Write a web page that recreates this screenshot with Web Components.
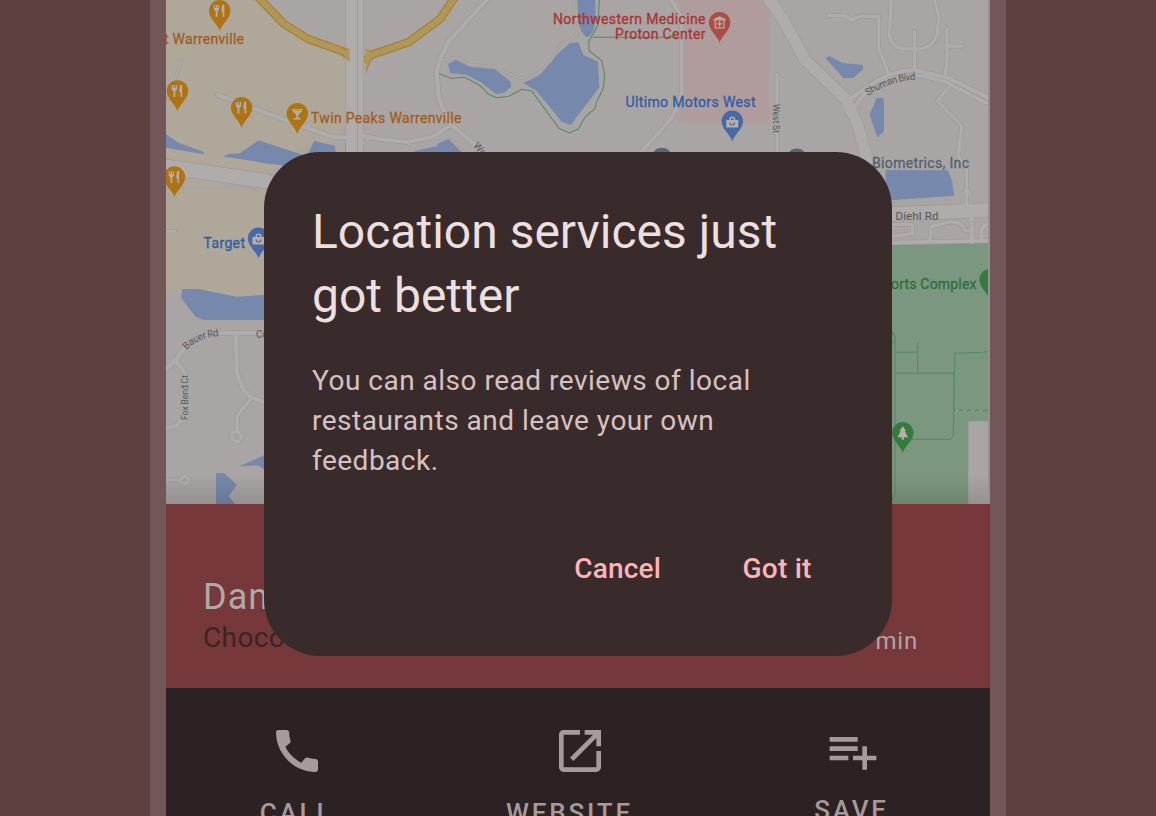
<!DOCTYPE html>
<html lang="en">
<head>
<meta charset="utf-8">
<title>Location services</title>
<style>
html,body{margin:0;height:100%;overflow:hidden;background:#5e4041;font-family:Roboto,"Liberation Sans",sans-serif}
</style>
</head>
<body>
<app-stage>
  <phone-frame>
    <area-map></area-map>
    <place-header><span slot="name">Dan</span><span slot="kind">Choco</span><span slot="time">min</span></place-header>
    <action-bar>
      <action-item icon="call">CALL</action-item>
      <action-item icon="open" style="--trail:20px">WEBSITE</action-item>
      <action-item icon="list" style="--gap:13px;--trail:2px">SAVE</action-item>
    </action-bar>
  </phone-frame>
  <alert-dialog slot="overlay">
    <span slot="title">Location services just got better</span>
    <span slot="body">You can also read reviews of local restaurants and leave your own feedback.</span>
    <text-button slot="actions">Cancel</text-button>
    <text-button slot="actions">Got it</text-button>
  </alert-dialog>
</app-stage>
<script>
const define = (name, html) => customElements.define(name, class extends HTMLElement {
  constructor() {
    super();
    this.attachShadow({mode: 'open'});
  }
  connectedCallback() {
    this.shadowRoot.innerHTML = typeof html === 'function' ? html(this) : html;
  }
});

define('app-stage', `<style>
:host{display:flex;justify-content:center;position:relative;width:1156px;height:816px;overflow:hidden;background:#5e4041}
.overlay{position:absolute;left:264px;top:152px}
</style><slot></slot><div class="overlay"><slot name="overlay"></slot></div>`);

define('phone-frame', `<style>
:host{display:flex;flex-direction:column;box-sizing:border-box;width:856px;height:816px;border:solid #735758;border-width:0 16px;overflow:hidden;background:#2c2223}
</style><slot></slot>`);

define('place-header', `<style>
:host{display:flex;justify-content:space-between;align-items:flex-end;box-sizing:border-box;height:184px;flex:none;padding:0 72px 31px 37px;background:#76383a}
.name{font-size:36px;line-height:42px;margin-bottom:1px;letter-spacing:1px;color:#aeaaaa}
.kind{font-size:28px;line-height:38px;letter-spacing:.4px;color:#3c2324}
.time{font-size:24px;line-height:32px;letter-spacing:.8px;color:#b0a5a6}
</style><div><div class="name"><slot name="name"></slot></div><div class="kind"><slot name="kind"></slot></div></div>
<div class="time"><slot name="time"></slot></div>`);

define('action-bar', `<style>
:host{display:grid;grid-template-columns:261px 305px 241px;height:128px;flex:none;background:#2c2223;overflow:hidden}
</style><slot></slot>`);

const ICONS = {
  call: 'M20.01 15.38c-1.23 0-2.42-.2-3.53-.56a.977.977 0 0 0-1.01.24l-1.57 1.97c-2.83-1.35-5.48-3.9-6.89-6.83l1.95-1.66c.27-.28.35-.67.24-1.02-.37-1.11-.56-2.3-.56-3.53 0-.54-.45-.99-.99-.99H4.19C3.65 3 3 3.24 3 3.99 3 13.28 10.73 21 20.01 21c.71 0 .99-.63.99-1.18v-3.45c0-.54-.45-.99-.99-.99z',
  open: 'M19 19H5V5h7V3H5c-1.11 0-2 .9-2 2v14c0 1.1.89 2 2 2h14c1.1 0 2-.9 2-2v-7h-2v7zM14 3v2h3.59l-9.83 9.83 1.41 1.41L19 6.41V10h2V3h-7z',
  list: 'M14 10H2v2h12v-2zm0-4H2v2h12V6zm4 8v-4h-2v4h-4v2h4v4h2v-4h4v-2h-4zM2 16h8v-2H2v2z'
};
define('action-item', el => `<style>
:host{display:flex;flex-direction:column;align-items:center;padding-top:35px;color:#a69a9b;font-size:26px;font-weight:500;line-height:36px;letter-spacing:2.8px}
svg{width:56px;height:56px;fill:currentColor;margin-bottom:var(--gap,16px);flex:none}
span{margin-right:var(--trail,0)}
</style><svg viewBox="0 0 24 24"><path d="${ICONS[el.getAttribute('icon')]}"/></svg><span><slot></slot></span>`);

define('alert-dialog', `<style>
:host{display:flex;flex-direction:column;box-sizing:border-box;width:628px;height:504px;padding:48px;border-radius:56px;background:#392b2b}
.title{font-size:48px;line-height:64px;color:#eddfdf}
.body{margin-top:33px;font-size:28px;line-height:40px;letter-spacing:.5px;color:#d7c1c1}
.actions{display:flex;justify-content:flex-end;gap:17px;margin-top:auto}
</style><div class="title"><slot name="title"></slot></div><div class="body"><slot name="body"></slot></div>
<div class="actions"><slot name="actions"></slot></div>`);

define('text-button', `<style>
:host{display:flex;align-items:center;height:80px;padding:0 32.5px 0 32px;border-radius:40px;font-size:28px;font-weight:500;letter-spacing:.2px;color:#ffb3b8}
</style><slot></slot>`);

/* Map data: each tile is an origin in map pixels, its shapes are in thirds of a pixel. */
const TILES = [
  {o: [150, 0],
   land: [['M45 -5H320L390 75 470 122 572 155 590 170V375L560 410 540 440H470L395 500 220 560 45 560Z', '#afa799']],
   water: ['M45 400 85 428 160 455 163 463 45 443Z', 'M220 470 235 462 270 460 325 421 462 466 430 497 395 496 320 484Z', 'M492 423 555 437 558 470H470Z'],
   roads: [[5, 'M95 178 75 240 52 300'], [12, 'M204 285 420 365 552 412H600'], [8, 'M470 385 482 368'], [44, 'M610 -10V480'], [9, 'M635 -10V480']],
   green: ['M595 -5V125L600 150', 'M588 415V460']},
  {o: [360, 0],
   land: [],
   water: ['M264 192 287 179 328 200 405 208 452 245 453 260 432 279 408 282 365 248 320 224 272 219Z', 'M164 453 230 439 236 430 265 417 304 456H164Z', 'M490 249 540 225 590 165 628 130 655 127 670 165 714 185 718 262 632 375 605 365 530 273Z', 'M652 -5H706V70Q698 108 680 112 658 95 655 60Z'],
   roads: [[12, 'M385 -5 265 125 238 185 230 215 237 298 258 345 275 375 345 435 380 470'], [4, 'M240 178 262 180 287 172 325 192 400 200 480 235 530 222 575 180 602 132 640 115 653 95 640 60 643 -5'], [12, 'M10 408 60 418 140 426 215 412 275 374'], [6, 'M0 438 35 412']],
   green: ['M233 219 272 235 315 232 362 258 385 282 408 293 447 289 485 268 515 273 597 385 628 399 655 387 675 352 706 324 710 305 730 265 734 225 725 182 688 153 686 125 714 75 718 -5', 'M698 112H960']},
  {o: [560, 0],
   land: [['M345 -5H628V370H365L348 355 374 290 374 50Z', '#b09c9c']], water: [],
   roads: [[11, 'M330 -5 365 50V280Q350 330 330 360L240 460'], [10, 'M651 223V470']], green: []},
  {o: [780, 0], land: [],
   water: ['M136 174 148 168 188 189 249 195V208L220 234H190Z', 'M290 294H309L312 305V394L292 412 269 345Z'],
   roads: [[34, 'M-45 -20 10 60 75 180 195 295 230 365 260 470 270 500'], [10, 'M145 46 198 48 215 62 235 50 296 49V145L325 220'], [10, 'M334 -5 328 108Q340 145 370 147L430 145Q463 135 472 100L477 50 462 -5'], [10, 'M403 95V210'], [10, 'M501 85V170L496 235'], [9, 'M503 139H546'], [12, 'M205 300 270 255Q325 215 400 210L500 232 630 295'], [11, 'M225 320Q255 265 325 240 375 223 430 228L500 247 615 307 640 307'], [9, 'M512 255 472 302 545 378 536 468 550 500']], green: []},
  {o: [150, 160], land: [['M40 90H350V410H265L145 388 95 388 45 400Z', '#afa799'], ['M120 0H260L238 18Z', '#afa799']],
   water: ['M97 387 145 387 260 410 350 404V480H160L137 470 93 413Z', 'M265 -5H450L400 16 360 12Z'],
   roads: [[43, 'M35 18 350 64'], [8, 'M40 214H74']], green: []},
  {o: [150, 330], land: [], water: ['M198 429H222L261 465 236 499 258 525H198Z', 'M268 409 345 375V420L322 406Z'],
   roads: [[14, 'M30 133 75 92 108 48Q150 5 200 9H350'], [11, 'M75 92 104 128 104 255 82 285 40 300'], [13, 'M257 10 261 130Q280 190 305 203L355 220'], [11, 'M305 203 262 257V300'], [9, 'M262 304 277 318 265 336 248 329 245 312 262 300'], [9, 'M40 450H90L103 438 118 447 107 462 93 457']], green: []},
  {o: [860, 140], land: [['M90 313 400 308V1100H90Z', '#7c977f'], ['M325 844H400V1100H325Z', '#a9a5a5']],
   water: ['M77 90 263 91 276 122 283 167 90 181H77Z'],
   roads: [[10, 'M300 -5 294 48 320 90V200'], [6, 'M308 200V160L320 148 331 160V200'], [41, 'M80 222 400 210'], [10, 'M80 254H157V281L85 291'], [10, 'M210 302 213 260 275 245 300 250 315 271H330'], [12, 'M335 235V305'], [11, 'M365 300V265L385 250H410'], [11, 'M80 308 400 302']],
   green: ['M97 577 104 590 104 602 98 610', 'M94 572 105 590V1060L95 1082', 'M105 637H173M173 607V700M105 700H282M284 640 370 637 388 633M284 640 282 810M282 700 280 885Q277 898 267 898H110', 'M281 811H388']}
];
const each = (key, fn) => TILES.map(t => `<g transform="translate(${t.o}) scale(.33333)">${t[key].map(fn).join('')}</g>`).join('');

const FORK = '<path d="M-5.8-5.8h1.2v3h.9v-3h1.1v3h.9v-3h1.2v4q0 1.5-1.7 2V6h-1.8V.2q-1.8-.5-1.8-2zM2-3.5Q2-6 4.6-6.2V6H3V1.4H1.9z"/>';
const BAG = '<path fill-rule="evenodd" d="M-6-1.2h3v-.7a3 3 0 0 1 6 0v.7h3v7.4H-6zM-1.4-1.2h2.8v-.6a1.4 1.4 0 0 0-2.8 0zM-3 1.3a3 3 0 0 0 6 0H1.8a1.8 1.8 0 0 1-3.6 0z"/>';
const GLASS = '<path d="M-5-4.7h10v1.5L1 1.3v3h2.6v1.5h-7.2V4.3H-1v-3L-5-3.2zM-2.5-3h5l1-.9h-7z" fill-rule="evenodd"/>';
const HOSP = '<path fill-rule="evenodd" d="M0-6.4 6-3.5v1.3H5V6H-5v-8.2h-1v-1.3zM-3.7-2v6.7h7.4V-2zM-.7-1.5H.7V.6h2.2V2H.7v2H-.7V2h-2.2V.6h2.2z"/>';
const TREE = '<path d="M0-6.5 3.4-1.8H2l3.2 6.2H1V7H-1V4.4h-4.2L-2-1.8h-1.4z"/>';
const PINS = [
  [219.7, 10.7, '#ae7314', FORK], [177.5, 90.9, '#ae7314', FORK], [241.6, 107.6, '#ae7314', FORK],
  [297.3, 113.6, '#ae7314', GLASS], [174.5, 177, '#ae7314', FORK], [719.6, 22.6, '#a94d46', HOSP],
  [732.3, 121.3, '#4968a8', BAG], [258.5, 238.3, '#4968a8', BAG], [902.8, 432.8, '#357b40', TREE],
  [990, 279.8, '#357b40', ''], [661.8, 158.5, '#5a6771', ''], [796.7, 159.3, '#5a6771', '']
];
const LABELS = [
  ['t Warrenville', 164, 44.4, 80, '#a25d1b'], ['Twin Peaks Warrenville', 311, 123.4, 150.5, '#a25d1b'],
  ['Northwestern Medicine', 553, 24.4, 152.5, '#a73532'], ['Proton Center', 615, 39.2, 90.5, '#a73532'],
  ['Ultimo Motors West', 625.5, 106.5, 130, '#2d5da6'], ['Target', 203.5, 247.8, 41.5, '#2d5da6'],
  ['Biometrics, Inc', 872, 168.4, 97, '#52616c'], ['orts Complex', 891, 288.5, 85.5, '#2c6e40']
];

define('area-map', () => `<style>
:host{display:block;width:824px;height:504px;flex:none;overflow:hidden}
svg{display:block;font-family:Roboto,sans-serif}
.case,.road{fill:none;stroke-linecap:round;stroke-linejoin:round}
.case{stroke:#9d9999}.road{stroke:#b0acac}
.water{fill:#7688ab}.green{fill:none;stroke:#56896a;stroke-width:3.2}
.label{font-size:14px;font-weight:400;stroke-width:.3px}
.street{font-size:10px;fill:#585758;stroke:#aaa6a5;stroke-width:2px;paint-order:stroke}
</style><svg width="824" height="504" viewBox="166 0 824 504">
<defs><linearGradient id="shade" x1="0" y1="0" x2="0" y2="1"><stop stop-color="#000" stop-opacity="0"/><stop offset="1" stop-color="#000" stop-opacity=".12"/></linearGradient>
<path id="shuman" d="M868 96Q889 81 918 79.500"/><path id="bauer" d="M187 350Q196 338 220 336"/></defs>
<rect x="166" width="824" height="504" fill="#a9a5a5"/>
${each('land', ([d, c]) => `<path d="${d}" fill="${c}"/>`)}
${each('water', d => `<path class="water" d="${d}"/>`)}
${each('green', d => `<path class="green" d="${d}"/>`)}
<g fill="none" stroke-linejoin="round"><path d="M256-5 284 24 308 39 342 51 352 57M457-6 440 19 409 42 371 55 364 62" stroke="#a98130" stroke-width="8.500"/>
<path d="M256-5 284 24 308 39 342 51 352 57M457-6 440 19 409 42 371 55 364 62" stroke="#af975c" stroke-width="6"/></g>
${each('roads', ([w, d]) => `<path class="case" stroke-width="${w + 4}" d="${d}"/>`)}
${each('roads', ([w, d]) => `<path class="road" stroke-width="${w}" d="${d}"/>`)}
<path d="M357.500 0V152" stroke="#a29e9e" stroke-width="1"/>
<path d="M342 48.500 349.500 49.500V61L341 53.500Z" fill="#af975c"/><path d="M342 48.500 349.500 49.500M341 53.500 349.500 61" stroke="#a98130"/>
<path d="M365.500 49.500 373 51.500 370 58.500 366 72.500Z" fill="#af975c"/><path d="M365.500 49.500 373 51.500M370.500 60 366 72.500" stroke="#a98130"/>
<path d="M956 410.500H988" stroke="#a9b6a7" stroke-width="1.200" stroke-dasharray="2 6"/>
${PINS.map(([x, y, c, g]) => `<g transform="translate(${x} ${y})"><path fill="${c}" d="M0 20.300C-1.700 13.500-10.700 8-10.700 0a10.700 10.700 0 0 1 21.400 0C10.700 8 1.700 13.500 0 20.300z"/><g fill="#b7aea6">${g}</g></g>`).join('')}
${LABELS.map(([t, x, y, w, c]) => `<text class="label" x="${x}" y="${y}" textLength="${w}" fill="${c}" stroke="${c}">${t}</text>`).join('')}
<text class="street" style="font-size:11.500px" x="895.500" y="220" textLength="43">Diehl Rd</text>
<text class="street"><textPath href="#shuman" textLength="51">Shuman Blvd</textPath></text>
<text class="street"><textPath href="#bauer" textLength="36">Bauer Rd</textPath></text>
<text class="street" x="256" y="337.500">Co</text>
<text class="street" style="font-size:9px" transform="translate(188 420) rotate(-90)" textLength="45">Fox Bend Ct</text>
<text class="street" style="font-size:9px" transform="translate(773 104) rotate(90)" textLength="29">West St</text>
<text class="street" transform="translate(473 146) rotate(48)">We</text>
<rect x="166" y="474" width="824" height="30" fill="url(#shade)"/>
<rect x="988" width="2" height="504" fill="#949192"/>
</svg>`);
</script>
</body>
</html>
